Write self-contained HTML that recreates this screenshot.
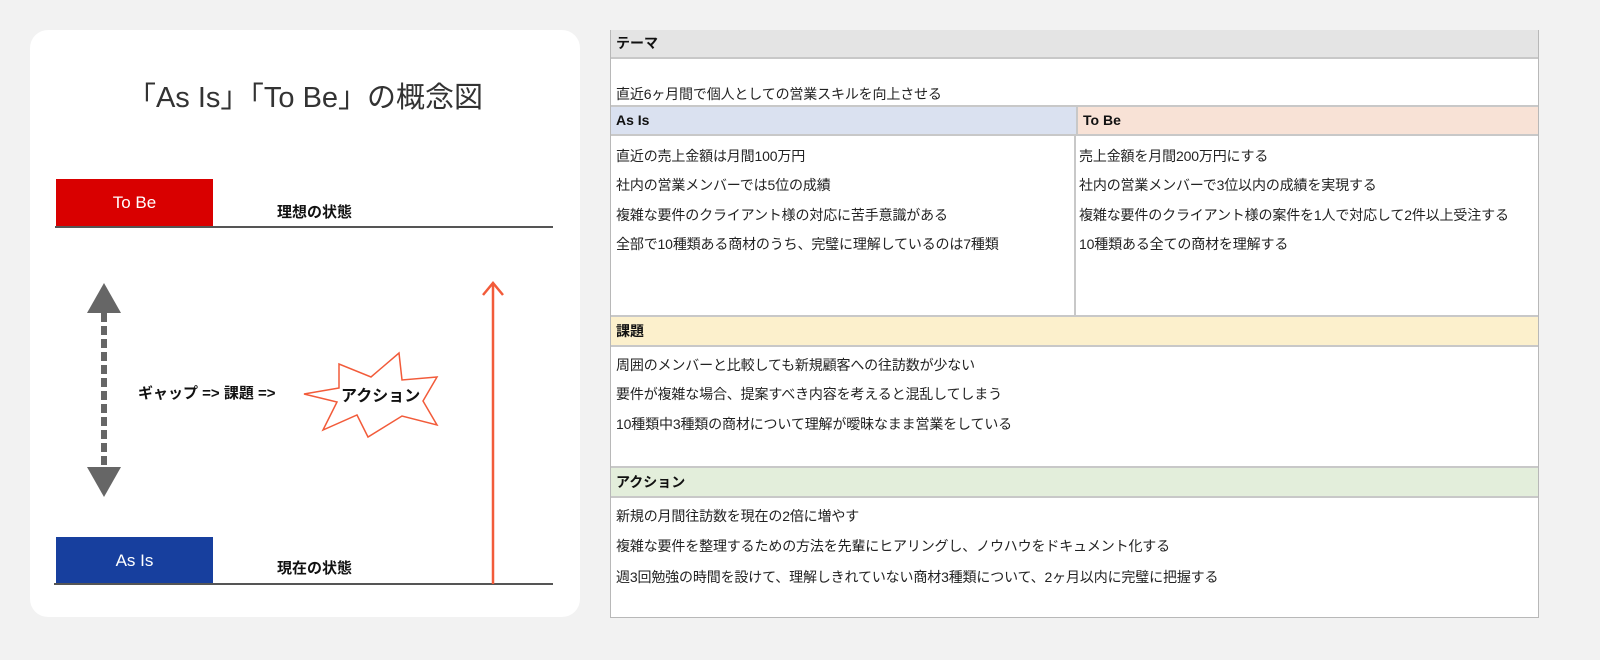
<!DOCTYPE html>
<html><head><meta charset="utf-8"><style>
body{margin:0;width:1600px;height:660px;background:#f2f2f2;position:relative;overflow:hidden;font-family:"Liberation Sans","Noto Sans CJK JP",sans-serif;}
.card{position:absolute;left:30px;top:30px;width:550px;height:587px;background:#fff;border-radius:18px;}
.a{position:absolute;white-space:nowrap;}
.tbl{position:absolute;left:610px;top:30px;width:927px;height:586px;background:#fff;border:1px solid #b8b8b8;}
.h{position:absolute;left:0;right:0;font-weight:bold;font-size:14px;color:#111;padding-left:5px;box-sizing:border-box;border-top:2px solid #c8c8c8;border-bottom:2px solid #c8c8c8;}
.t{position:absolute;font-size:14px;color:#222;letter-spacing:-0.15px;white-space:nowrap;}
</style></head><body>
<div class="card"></div>
<div class="a" style="left:0;width:610px;top:74px;text-align:center;font-size:29px;color:#333;">「As Is」「To Be」の概念図</div>
<div class="a" style="left:56px;top:179px;width:157px;height:48px;background:#d90000;color:#fff;font-size:17px;line-height:48px;text-align:center;">To Be</div>
<div class="a" style="left:55px;top:226px;width:498px;height:2px;background:#555;"></div>
<div class="a" style="left:277px;top:201px;font-size:15px;font-weight:bold;color:#111;">理想の状態</div>
<div class="a" style="left:56px;top:537px;width:157px;height:47px;background:#173f9e;color:#fff;font-size:17px;line-height:47px;text-align:center;">As Is</div>
<div class="a" style="left:54px;top:583px;width:499px;height:2px;background:#555;"></div>
<div class="a" style="left:277px;top:557px;font-size:15px;font-weight:bold;color:#111;">現在の状態</div>
<div class="a" style="left:138px;top:382px;font-size:15px;font-weight:bold;color:#111;">ギャップ =&gt; 課題 =&gt;</div>
<svg class="a" style="left:0;top:0" width="600" height="660">
<polygon points="87,313 104,283 121,313" fill="#666"/>
<line x1="104" y1="313" x2="104" y2="467" stroke="#666" stroke-width="6" stroke-dasharray="9,4"/>
<polygon points="87,467 104,497 121,467" fill="#666"/>
<line x1="493" y1="584" x2="493" y2="283" stroke="#f25b3a" stroke-width="2.5"/>
<polyline points="483,295 493,283 503,295" fill="none" stroke="#f25b3a" stroke-width="2.5"/>
<polygon points="304,394 339,388 339,364 371,377 399,353 402,380 437,377 423,401 437,425 402,416 368,437 357,415 323,430 337,402" fill="#fff" stroke="#f25b3a" stroke-width="1.5"/>
</svg>
<div class="a" style="left:341px;top:382px;font-size:16px;font-weight:bold;color:#111;">アクション</div>

<div class="tbl">
<div class="h" style="top:-1px;height:29px;background:#e4e4e4;border-top:none;line-height:27px;">テーマ</div>
<div class="t" style="left:5px;top:53px;">直近6ヶ月間で個人としての営業スキルを向上させる</div>
<div class="h" style="top:74px;height:31px;background:#dae1f0;line-height:27px;right:auto;width:465px;">As Is</div>
<div class="h" style="top:74px;height:31px;background:#f8e2d6;line-height:27px;left:465px;border-left:2px solid #c8c8c8;">To Be</div>
<div class="a" style="left:463px;top:104px;width:2px;height:182px;background:#c8c8c8;"></div>
<div class="t" style="left:5px;top:115px;">直近の売上金額は月間100万円</div>
<div class="t" style="left:5px;top:144px;">社内の営業メンバーでは5位の成績</div>
<div class="t" style="left:5px;top:174px;">複雑な要件のクライアント様の対応に苦手意識がある</div>
<div class="t" style="left:5px;top:203px;">全部で10種類ある商材のうち、完璧に理解しているのは7種類</div>
<div class="t" style="left:468px;top:115px;">売上金額を月間200万円にする</div>
<div class="t" style="left:468px;top:144px;">社内の営業メンバーで3位以内の成績を実現する</div>
<div class="t" style="left:468px;top:174px;">複雑な要件のクライアント様の案件を1人で対応して2件以上受注する</div>
<div class="t" style="left:468px;top:203px;">10種類ある全ての商材を理解する</div>
<div class="h" style="top:284px;height:32px;background:#fcf0cc;line-height:28px;">課題</div>
<div class="t" style="left:5px;top:324px;">周囲のメンバーと比較しても新規顧客への往訪数が少ない</div>
<div class="t" style="left:5px;top:353px;">要件が複雑な場合、提案すべき内容を考えると混乱してしまう</div>
<div class="t" style="left:5px;top:383px;">10種類中3種類の商材について理解が曖昧なまま営業をしている</div>
<div class="h" style="top:435px;height:32px;background:#e3eedb;line-height:28px;">アクション</div>
<div class="t" style="left:5px;top:475px;">新規の月間往訪数を現在の2倍に増やす</div>
<div class="t" style="left:5px;top:505px;">複雑な要件を整理するための方法を先輩にヒアリングし、ノウハウをドキュメント化する</div>
<div class="t" style="left:5px;top:536px;">週3回勉強の時間を設けて、理解しきれていない商材3種類について、2ヶ月以内に完璧に把握する</div>
</div>
</body></html>
